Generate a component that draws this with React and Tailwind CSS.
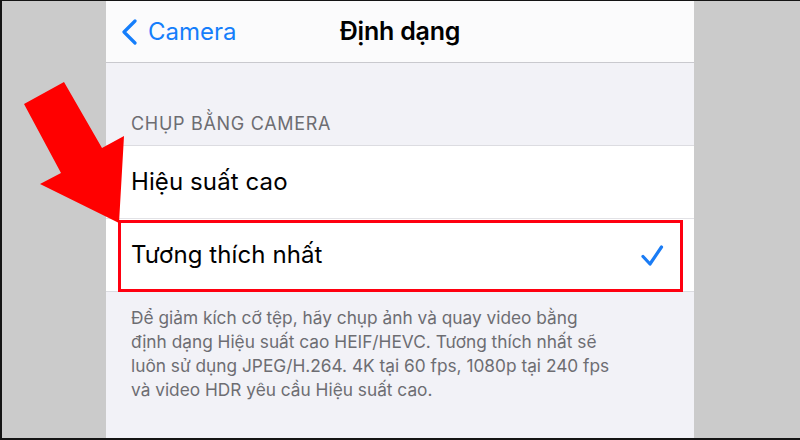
import React from 'react';

const ArrowOverlay = () => (
  <svg className="absolute left-0 top-0 pointer-events-none" width="140" height="240" viewBox="0 0 140 240">
    <polygon
      points="22,103 62,81 100,147 122,135 117,222 38,183 59,172"
      fill="#ff0000"
    />
  </svg>
);

const App = () => {
  return (
    <div
      className="relative w-[800px] h-[440px] overflow-hidden bg-[#cbcbcb] border-t border-l-2 border-b-2 border-[#141414]"
      style={{ fontFamily: 'Inter, "Noto Sans", sans-serif' }}
    >
      <div className="ml-[104px] w-[588px] h-full flex flex-col bg-[#f2f2f7]">
        {/* Thanh điều hướng */}
        <div className="relative h-[62px] shrink-0 flex items-center bg-[#fbfbfc] border-b border-[#c9c9ce]">
          <div className="flex items-center pl-[15px] text-[#157efb]">
            <svg width="18" height="26" viewBox="0 0 18 26" fill="none" stroke="currentColor" strokeWidth="3.2" strokeLinecap="round" strokeLinejoin="round">
              <path d="M14 2 L3 13 L14 24" />
            </svg>
            <span className="ml-[9px] text-[24px]">Camera</span>
          </div>
          <div className="absolute inset-0 flex items-center justify-center">
            <span className="text-[25px] font-semibold text-black tracking-[-0.2px]">Định dạng</span>
          </div>
        </div>

        {/* Tiêu đề nhóm */}
        <div className="h-[82px] shrink-0 flex items-end pb-[8px] pl-[25px]">
          <span className="text-[18px] text-[#6d6d72] tracking-[0.7px]">CHỤP BẰNG CAMERA</span>
        </div>

        {/* Danh sách tuỳ chọn */}
        <div className="bg-white border-t border-b border-[#dcdce1]">
          <div className="h-[73px] flex items-center pl-[25px] border-b border-[#e2e2e6]">
            <span className="text-[24px] text-black tracking-[0.1px]">Hiệu suất cao</span>
          </div>
          <div className="h-[72px] flex items-center justify-between pl-[25px] pr-[30px]">
            <span className="text-[24px] text-black tracking-[0.1px]">Tương thích nhất</span>
            <svg width="24" height="22" viewBox="0 0 24 22" fill="none" stroke="#1a7cf5" strokeWidth="3.2" strokeLinecap="round" strokeLinejoin="round">
              <path d="M3 12.5 L10 20 L21.5 3" />
            </svg>
          </div>
        </div>

        {/* Chú thích */}
        <div className="pt-[14px] pl-[25px] pr-[16px]">
          <p className="text-[17.3px] leading-[24px] text-[#6d6d72]">
            Để giảm kích cỡ tệp, hãy chụp ảnh và quay video bằng
            <br />
            định dạng Hiệu suất cao HEIF/HEVC. Tương thích nhất sẽ
            <br />
            luôn sử dụng JPEG/H.264. 4K tại 60 fps, 1080p tại 240 fps
            <br />
            và video HDR yêu cầu Hiệu suất cao.
          </p>
        </div>
      </div>

      {/* Khung đỏ đánh dấu */}
      <div className="absolute left-[116px] top-[219px] w-[565px] h-[72px] border-[3px] border-[#ff0010] pointer-events-none" />
      <ArrowOverlay />
    </div>
  );
};

export default App;
